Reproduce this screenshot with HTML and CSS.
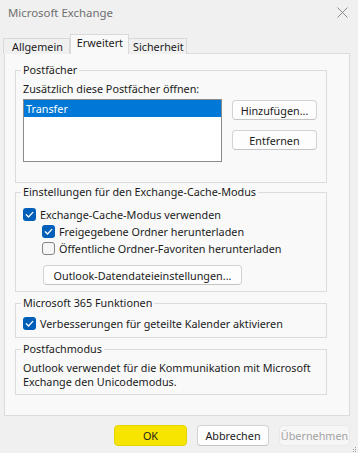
FILE: index.html
```html
<!DOCTYPE html>
<html lang="de">
<head>
  <meta charset="UTF-8" />
  <meta name="viewport" content="width=device-width, initial-scale=1" />
  <title>Microsoft Exchange</title>
  <link rel="stylesheet" href="styles.css">
</head>
<body>
  <div class="window">
    <header class="titlebar">
      <span class="title">Microsoft Exchange</span>
      <svg class="close" width="11" height="11" viewBox="0 0 11 11">
        <path d="M0.5 0.5 L10.5 10.5 M10.5 0.5 L0.5 10.5" stroke="#8c8c8c" stroke-width="1" fill="none" />
      </svg>
    </header>

    <nav class="tabs">
      <div class="tab">Allgemein</div>
      <div class="tab active">Erweitert</div>
      <div class="tab">Sicherheit</div>
    </nav>

    <main class="panel">
      <fieldset class="group mailboxes">
        <legend>Postfächer</legend>
        <div class="label">Zusätzlich diese Postfächer öffnen:</div>
        <div class="mailbox-row">
          <div class="listbox">
            <div class="list-item selected">Transfer</div>
          </div>
          <div class="side-buttons">
            <button class="btn">Hinzufügen...</button>
            <button class="btn">Entfernen</button>
          </div>
        </div>
      </fieldset>

      <fieldset class="group cache">
        <legend>Einstellungen für den Exchange-Cache-Modus</legend>
        <label class="check">
          <span class="box checked"><svg width="13" height="13" viewBox="0 0 13 13"><path d="M3.3 6.8 L5.5 9 L9.8 4.4" stroke="#fff" stroke-width="1.3" fill="none" stroke-linecap="round" stroke-linejoin="round" /></svg></span>
          Exchange-Cache-Modus verwenden
        </label>
        <label class="check sub">
          <span class="box checked"><svg width="13" height="13" viewBox="0 0 13 13"><path d="M3.3 6.8 L5.5 9 L9.8 4.4" stroke="#fff" stroke-width="1.3" fill="none" stroke-linecap="round" stroke-linejoin="round" /></svg></span>
          Freigegebene Ordner herunterladen
        </label>
        <label class="check sub">
          <span class="box"></span>
          Öffentliche Ordner-Favoriten herunterladen
        </label>
        <button class="btn datafile">Outlook-Datendateieinstellungen...</button>
      </fieldset>

      <fieldset class="group features">
        <legend>Microsoft 365 Funktionen</legend>
        <label class="check">
          <span class="box checked"><svg width="13" height="13" viewBox="0 0 13 13"><path d="M3.3 6.8 L5.5 9 L9.8 4.4" stroke="#fff" stroke-width="1.3" fill="none" stroke-linecap="round" stroke-linejoin="round" /></svg></span>
          Verbesserungen für geteilte Kalender aktivieren
        </label>
      </fieldset>

      <fieldset class="group mode">
        <legend>Postfachmodus</legend>
        <p class="mode-text">Outlook verwendet für die Kommunikation mit Microsoft<br>Exchange den Unicodemodus.</p>
      </fieldset>
    </main>

    <footer class="actions">
      <button class="btn action ok">OK</button>
      <button class="btn action">Abbrechen</button>
      <button class="btn action disabled">Übernehmen</button>
    </footer>

    <svg class="grip" width="5" height="5" viewBox="0 0 5 5">
      <rect x="3" y="0" width="1" height="1" fill="#a0a0a0" />
      <rect x="1" y="2" width="1" height="1" fill="#a0a0a0" />
      <rect x="3" y="2" width="1" height="1" fill="#a0a0a0" />
      <rect x="3" y="4" width="1" height="1" fill="#a0a0a0" />
      <rect x="1" y="4" width="1" height="1" fill="#a0a0a0" />
    </svg>
  </div>
</body>
</html>
```

FILE: styles.css
```css
* {
  box-sizing: border-box;
}
body {
  margin: 0;
  background: #f0f0f0;
  color: #1b1b1b;
  font-family: 'Noto Sans', 'Segoe UI', Arial, sans-serif;
  font-size: 10.8px;
  line-height: 16px;
}
.window {
  position: relative;
  width: 358px;
  height: 453px;
  overflow: hidden;
}
.titlebar {
  height: 26px;
  padding: 0 10px 0 8px;
  display: flex;
  align-items: center;
  justify-content: space-between;
}
.title {
  color: #6f6f6f;
  font-size: 11.4px;
}
.close {
  margin-top: -1px;
}
.tabs {
  display: flex;
  align-items: flex-end;
  margin: 8px 0 -1px 3px;
  position: relative;
  z-index: 1;
}
.tab {
  height: 16px;
  padding: 0 6px 0 8px;
  border: 1px solid #d9d9d9;
  border-bottom: none;
  background: #f0f0f0;
  line-height: 16px;
}
.tab + .tab {
  border-left: none;
}
.tab.active {
  height: 20px;
  padding: 0 5px 0 6px;
  background: #f9f9f9;
  border-left: 1px solid #d9d9d9;
  line-height: 16px;
}
.tab.active + .tab {
  border-left: none;
  padding: 0 2px 0 4px;
}
.panel {
  margin: 0 8px 0 4px;
  height: 363px;
  padding: 8px 22px 0 10px;
  background: #f9f9f9;
  border: 1px solid #dcdcdc;
}
.group {
  margin: 0;
  padding: 0 4px 0 7px;
  border: 1px solid #dcdcdc;
  min-width: 0;
}
.group legend {
  padding: 0 2px;
  margin-left: -2px;
  line-height: 16px;
}
.label {
  margin-top: 3px;
}
.mailbox-row {
  display: flex;
  gap: 10px;
  margin-top: 2px;
}
.listbox {
  width: 199px;
  height: 63px;
  background: #fff;
  border: 1px solid #8a8a8a;
}
.list-item {
  height: 17px;
  padding-left: 2px;
  line-height: 17px;
}
.list-item.selected {
  background: #0078d7;
  color: #fff;
}
.side-buttons {
  display: flex;
  flex-direction: column;
  gap: 10px;
  padding-top: 1px;
}
.btn {
  font: inherit;
  color: #1b1b1b;
  background: #fdfdfd;
  border: 1px solid #d3d3d3;
  border-bottom-color: #c4c4c4;
  border-radius: 4px;
  height: 20px;
  padding: 0;
  line-height: 17px;
}
.side-buttons .btn {
  width: 85px;
}
.mailboxes {
  padding-bottom: 20px;
}
.cache {
  margin-top: 1px;
  padding-bottom: 6px;
}
.check {
  display: flex;
  align-items: center;
  gap: 4px;
  height: 17px;
}
.cache .check:first-of-type {
  margin-top: 6px;
}
.check.sub {
  padding-left: 19px;
}
.box {
  width: 13px;
  height: 13px;
  border-radius: 3px;
  border: 1px solid #858585;
  background: #f6f6f6;
  flex: none;
  display: flex;
}
.box.checked {
  border: none;
  background: #005fb8;
}
.datafile {
  display: block;
  margin: 8px 0 0 20px;
  width: 199px;
}
.features {
  margin-top: 3px;
  padding-bottom: 5px;
}
.features .check {
  margin-top: 4px;
}
.mode {
  margin-top: 3px;
  padding-bottom: 5px;
}
.mode-text {
  margin: 4px 0 0;
  line-height: 14px;
  white-space: nowrap;
}
.actions {
  display: flex;
  justify-content: flex-end;
  gap: 10px;
  margin-top: 9px;
  padding-right: 8px;
}
.action {
  height: 21px;
  width: 72px;
}
.action.ok {
  width: 73px;
  background: #f7e500;
  border-color: #e6d400;
}
.action.disabled {
  width: 71px;
  color: #a3a3a3;
  background: #f6f6f6;
  border-color: #e9e9e9;
  white-space: nowrap;
  overflow: visible;
}
.grip {
  position: absolute;
  right: 1px;
  bottom: 1px;
}
```
